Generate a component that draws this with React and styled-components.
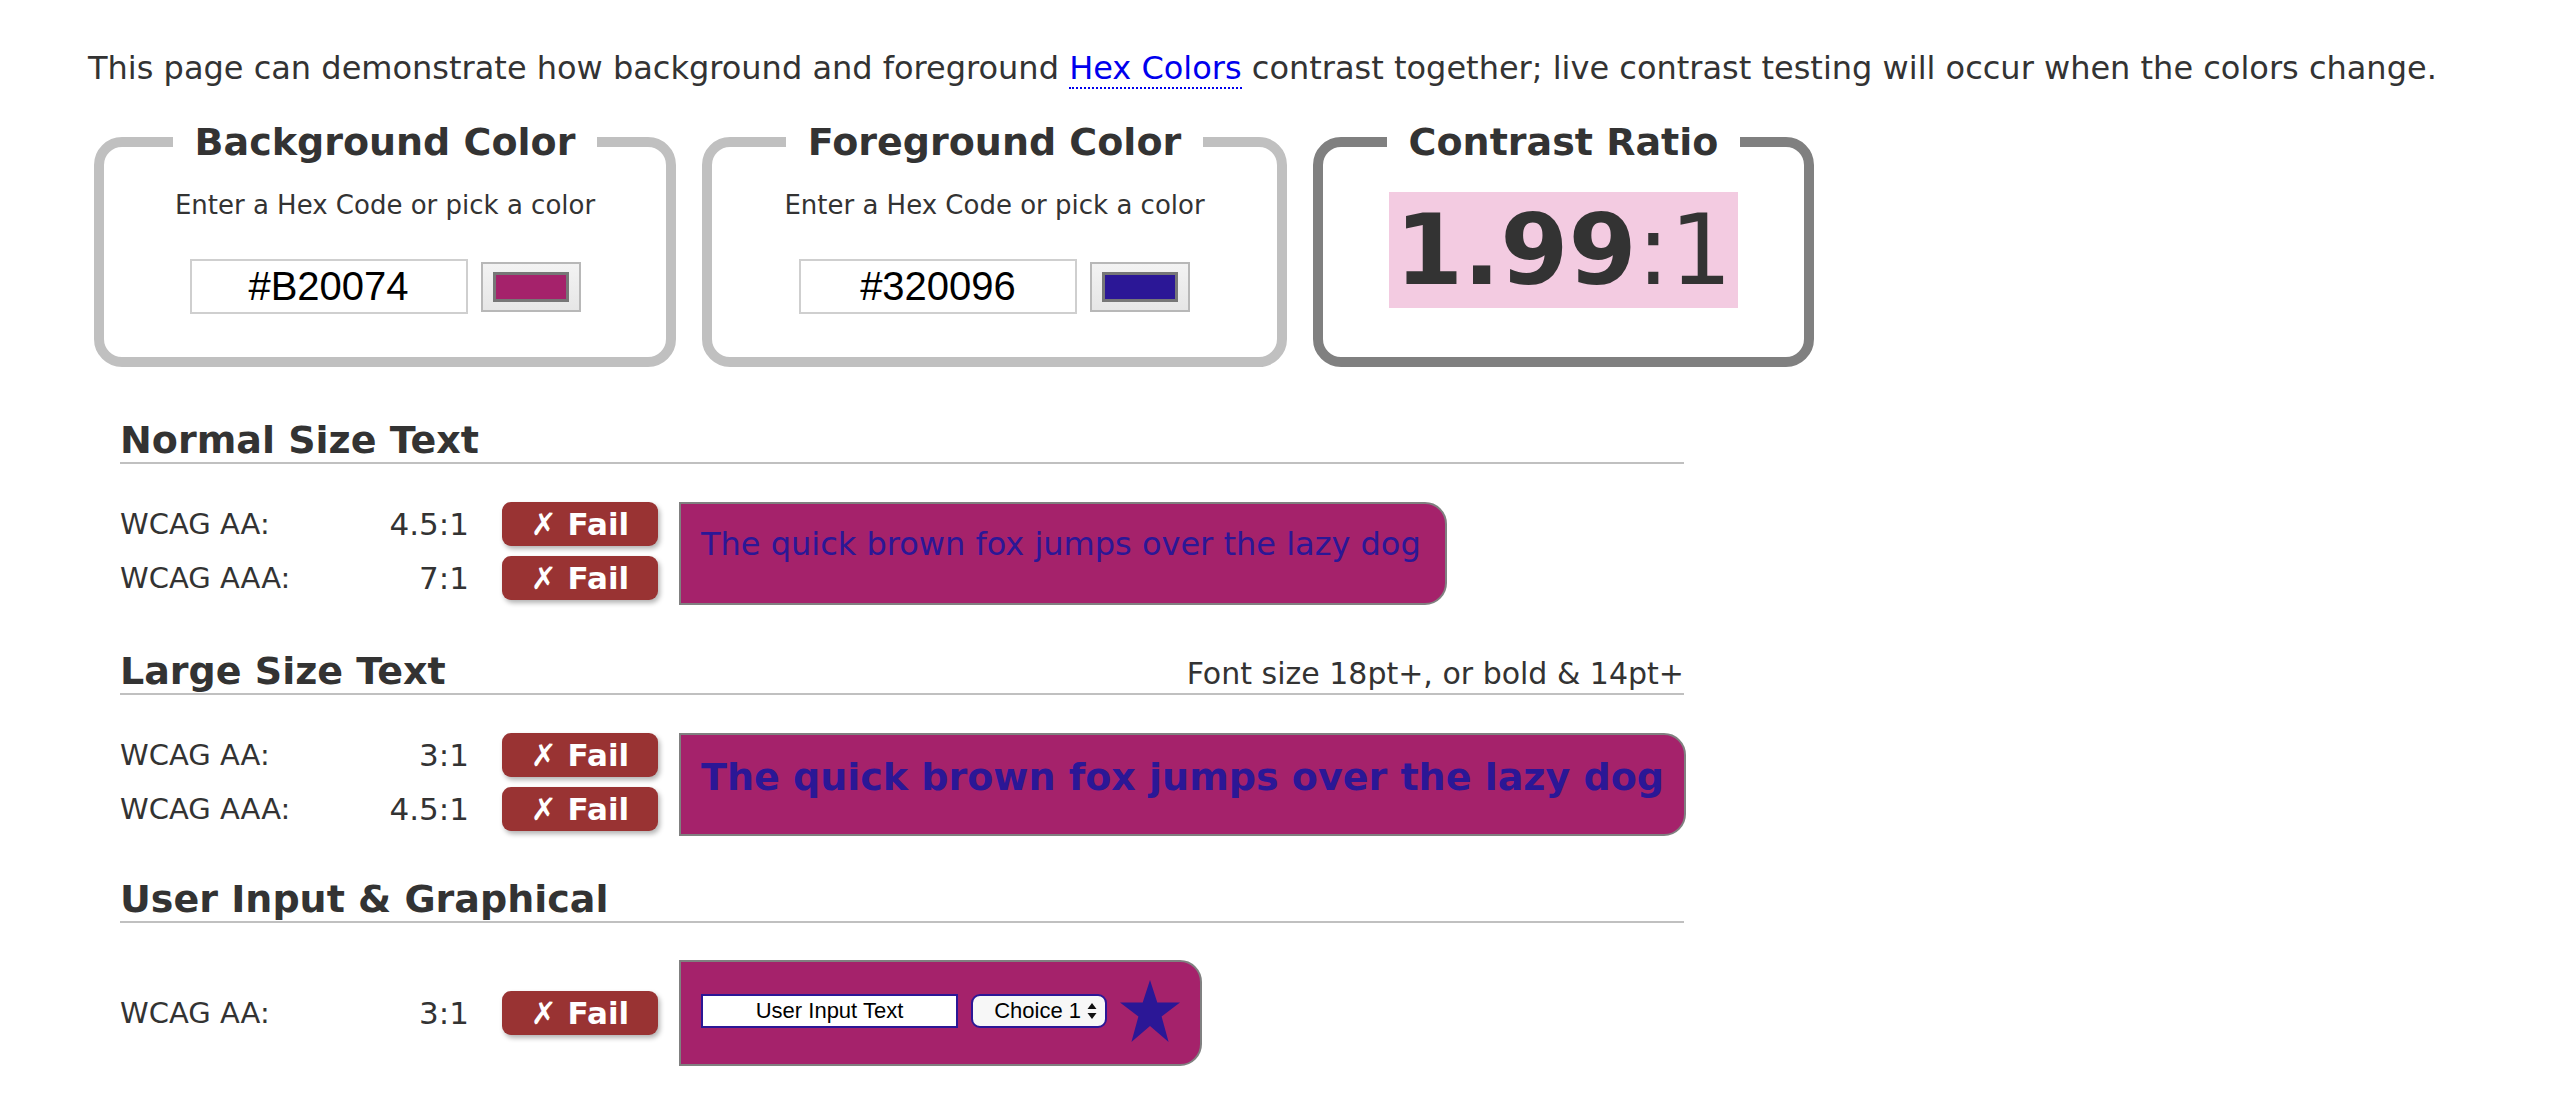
import React from "react";
import styled, { createGlobalStyle } from "styled-components";

const BG = "#a5226b";
const FG = "#2b1796";

const GlobalStyle = createGlobalStyle`
  body {
    margin: 0;
    background: #fff;
    color: #333;
    font-family: "DejaVu Sans", Verdana, sans-serif;
  }
`;

const Page = styled.div`
  padding: 48px 0 40px 88px;
`;

const Intro = styled.p`
  margin: 0;
  font-size: 32px;
  line-height: 40px;
`;

const HexLink = styled.a`
  color: #0000ee;
  text-decoration: none;
  border-bottom: 2px dotted #0000ee;
`;

const BoxRow = styled.div`
  display: flex;
  align-items: stretch;
  gap: 26px;
  margin: 30px 0 0 6px;
`;

const ColorBox = styled.fieldset`
  box-sizing: border-box;
  width: ${(p) => p.$w}px;
  min-width: 0;
  margin: 0;
  padding: ${(p) => p.$pt}px 20px 43px;
  border: 10px solid ${(p) => p.$tone};
  border-radius: 28px;
  text-align: center;
`;

const BoxTitle = styled.legend`
  margin: 0 auto;
  padding: 0 22px;
  font-size: 38px;
  line-height: 48px;
  font-weight: bold;
  color: #333;
`;

const Hint = styled.div`
  font-size: 26px;
  line-height: 32px;
  margin-bottom: 38px;
`;

const PickRow = styled.div`
  display: flex;
  justify-content: center;
  align-items: center;
  gap: 13px;
`;

const HexInput = styled.input`
  box-sizing: border-box;
  width: 278px;
  height: 55px;
  border: 2px solid #cfcfcf;
  text-align: center;
  font-family: "Liberation Sans", Arial, sans-serif;
  font-size: 40px;
  color: #000;
  padding: 0;
  outline: none;
`;

const SwatchButton = styled.button`
  box-sizing: border-box;
  width: 100px;
  height: 50px;
  padding: 8px 10px;
  border: 2px solid #b8b8b8;
  background: linear-gradient(#f3f3f3, #e6e6e6);
  display: flex;
`;

const Swatch = styled.span`
  flex: 1;
  background: ${(p) => p.$color};
  border: 3px solid #777;
`;

const RatioWrap = styled.div`
  display: flex;
  justify-content: center;
`;

const RatioValue = styled.div`
  background: #f3cbe1;
  padding: 0 6px;
  font-size: 98px;
  line-height: 116px;
  color: #333;
`;

const RatioNum = styled.strong`
  font-weight: bold;
`;

const Sections = styled.div`
  width: 1564px;
  margin-left: 32px;
`;

const Section = styled.section`
  margin-top: ${(p) => p.$mt}px;
`;

const SectionHead = styled.div`
  display: flex;
  justify-content: space-between;
  align-items: baseline;
  border-bottom: 2px solid #c0c0c0;
`;

const SectionTitle = styled.h2`
  margin: 0;
  font-size: 38px;
  line-height: 44px;
  font-weight: bold;
  color: #333;
`;

const Note = styled.span`
  font-size: 30px;
`;

const SectionBody = styled.div`
  display: flex;
  align-items: ${(p) => (p.$center ? "center" : "flex-start")};
  margin-top: ${(p) => p.$gap}px;
`;

const Rows = styled.div`
  display: flex;
  flex-direction: column;
  gap: 10px;
`;

const Row = styled.div`
  display: flex;
  align-items: center;
  font-size: 29px;
`;

const Level = styled.span`
  width: 230px;
`;

const Ratio = styled.span`
  width: 119px;
  text-align: right;
  font-size: 31px;
`;

const FailBadge = styled.span`
  margin-left: 33px;
  width: 156px;
  height: 44px;
  line-height: 44px;
  border-radius: 9px;
  background: #993333;
  color: #fff;
  font-weight: bold;
  font-size: 31px;
  text-align: center;
  box-shadow: 2px 3px 5px rgba(0, 0, 0, 0.3);
`;

const Sample = styled.div`
  box-sizing: border-box;
  min-height: 103px;
  margin-left: 21px;
  padding: ${(p) =>
    p.$flex ? "18px 20px 22px" : p.$large ? "19px 20px" : "19px 24px 19px 20px"};
  background: ${BG};
  color: ${FG};
  border: 2px solid #808080;
  border-radius: 0 22px 22px 0;
  font-size: ${(p) => (p.$large ? "38px" : "32px")};
  line-height: ${(p) => (p.$large ? "46px" : "42px")};
  font-weight: ${(p) => (p.$large ? "bold" : "normal")};
  white-space: nowrap;
  display: ${(p) => (p.$flex ? "flex" : "block")};
  align-items: center;
  gap: 13px;
`;

const UserInput = styled.input`
  box-sizing: border-box;
  width: 257px;
  height: 34px;
  border: 2px solid ${FG};
  background: #fff;
  font-family: "Liberation Sans", Arial, sans-serif;
  font-size: 22px;
  text-align: center;
  color: #000;
  padding: 0;
  outline: none;
`;

const FakeSelect = styled.span`
  box-sizing: border-box;
  display: inline-flex;
  align-items: center;
  justify-content: flex-end;
  gap: 6px;
  width: 136px;
  height: 34px;
  padding: 0 8px 0 10px;
  border: 2px solid ${FG};
  border-radius: 9px;
  background: #f7f7f7;
  font-family: "Liberation Sans", Arial, sans-serif;
  font-size: 22px;
  color: #000;
`;

const Arrows = () => (
  <svg width="10" height="18" viewBox="0 0 10 18">
    <path d="M5 1 L9.5 7 H0.5 Z M5 17 L9.5 11 H0.5 Z" fill="#111" />
  </svg>
);

const Star = () => (
  <svg width="60" height="62" viewBox="0 0 60 62">
    <polygon
      points="30,0 37.3,22.6 60,22.6 41.6,36.6 48.6,62 30,46 11.4,62 18.4,36.6 0,22.6 22.7,22.6"
      fill={FG}
    />
  </svg>
);

const CheckRow = ({ level, ratio }) => (
  <Row>
    <Level>{level}</Level>
    <Ratio>{ratio}</Ratio>
    <FailBadge>✗ Fail</FailBadge>
  </Row>
);

const pangram = "The quick brown fox jumps over the lazy dog";

export default function App() {
  return (
    <Page>
      <GlobalStyle />
      <Intro>
        This page can demonstrate how background and foreground{" "}
        <HexLink href="#">Hex Colors</HexLink> contrast together; live
        contrast testing will occur when the colors change.
      </Intro>

      <BoxRow>
        <ColorBox $w={582} $pt={23} $tone="#c0c0c0">
          <BoxTitle>Background Color</BoxTitle>
          <Hint>Enter a Hex Code or pick a color</Hint>
          <PickRow>
            <HexInput defaultValue="#B20074" />
            <SwatchButton>
              <Swatch $color={BG} />
            </SwatchButton>
          </PickRow>
        </ColorBox>
        <ColorBox $w={585} $pt={23} $tone="#c0c0c0">
          <BoxTitle>Foreground Color</BoxTitle>
          <Hint>Enter a Hex Code or pick a color</Hint>
          <PickRow>
            <HexInput defaultValue="#320096" />
            <SwatchButton>
              <Swatch $color={FG} />
            </SwatchButton>
          </PickRow>
        </ColorBox>
        <ColorBox $w={501} $pt={26} $tone="#808080">
          <BoxTitle>Contrast Ratio</BoxTitle>
          <RatioWrap>
            <RatioValue>
              <RatioNum>1.99</RatioNum>:1
            </RatioValue>
          </RatioWrap>
        </ColorBox>
      </BoxRow>

      <Sections>
        <Section $mt={51}>
          <SectionHead>
            <SectionTitle>Normal Size Text</SectionTitle>
          </SectionHead>
          <SectionBody $gap={38}>
            <Rows>
              <CheckRow level="WCAG AA:" ratio="4.5:1" />
              <CheckRow level="WCAG AAA:" ratio="7:1" />
            </Rows>
            <Sample>{pangram}</Sample>
          </SectionBody>
        </Section>

        <Section $mt={44}>
          <SectionHead>
            <SectionTitle>Large Size Text</SectionTitle>
            <Note>Font size 18pt+, or bold &amp; 14pt+</Note>
          </SectionHead>
          <SectionBody $gap={38}>
            <Rows>
              <CheckRow level="WCAG AA:" ratio="3:1" />
              <CheckRow level="WCAG AAA:" ratio="4.5:1" />
            </Rows>
            <Sample $large>{pangram}</Sample>
          </SectionBody>
        </Section>

        <Section $mt={41}>
          <SectionHead>
            <SectionTitle>User Input &amp; Graphical</SectionTitle>
          </SectionHead>
          <SectionBody $gap={37} $center>
            <Rows>
              <CheckRow level="WCAG AA:" ratio="3:1" />
            </Rows>
            <Sample $flex>
              <UserInput defaultValue="User Input Text" />
              <FakeSelect>
                Choice 1 <Arrows />
              </FakeSelect>
              <Star />
            </Sample>
          </SectionBody>
        </Section>
      </Sections>
    </Page>
  );
}
